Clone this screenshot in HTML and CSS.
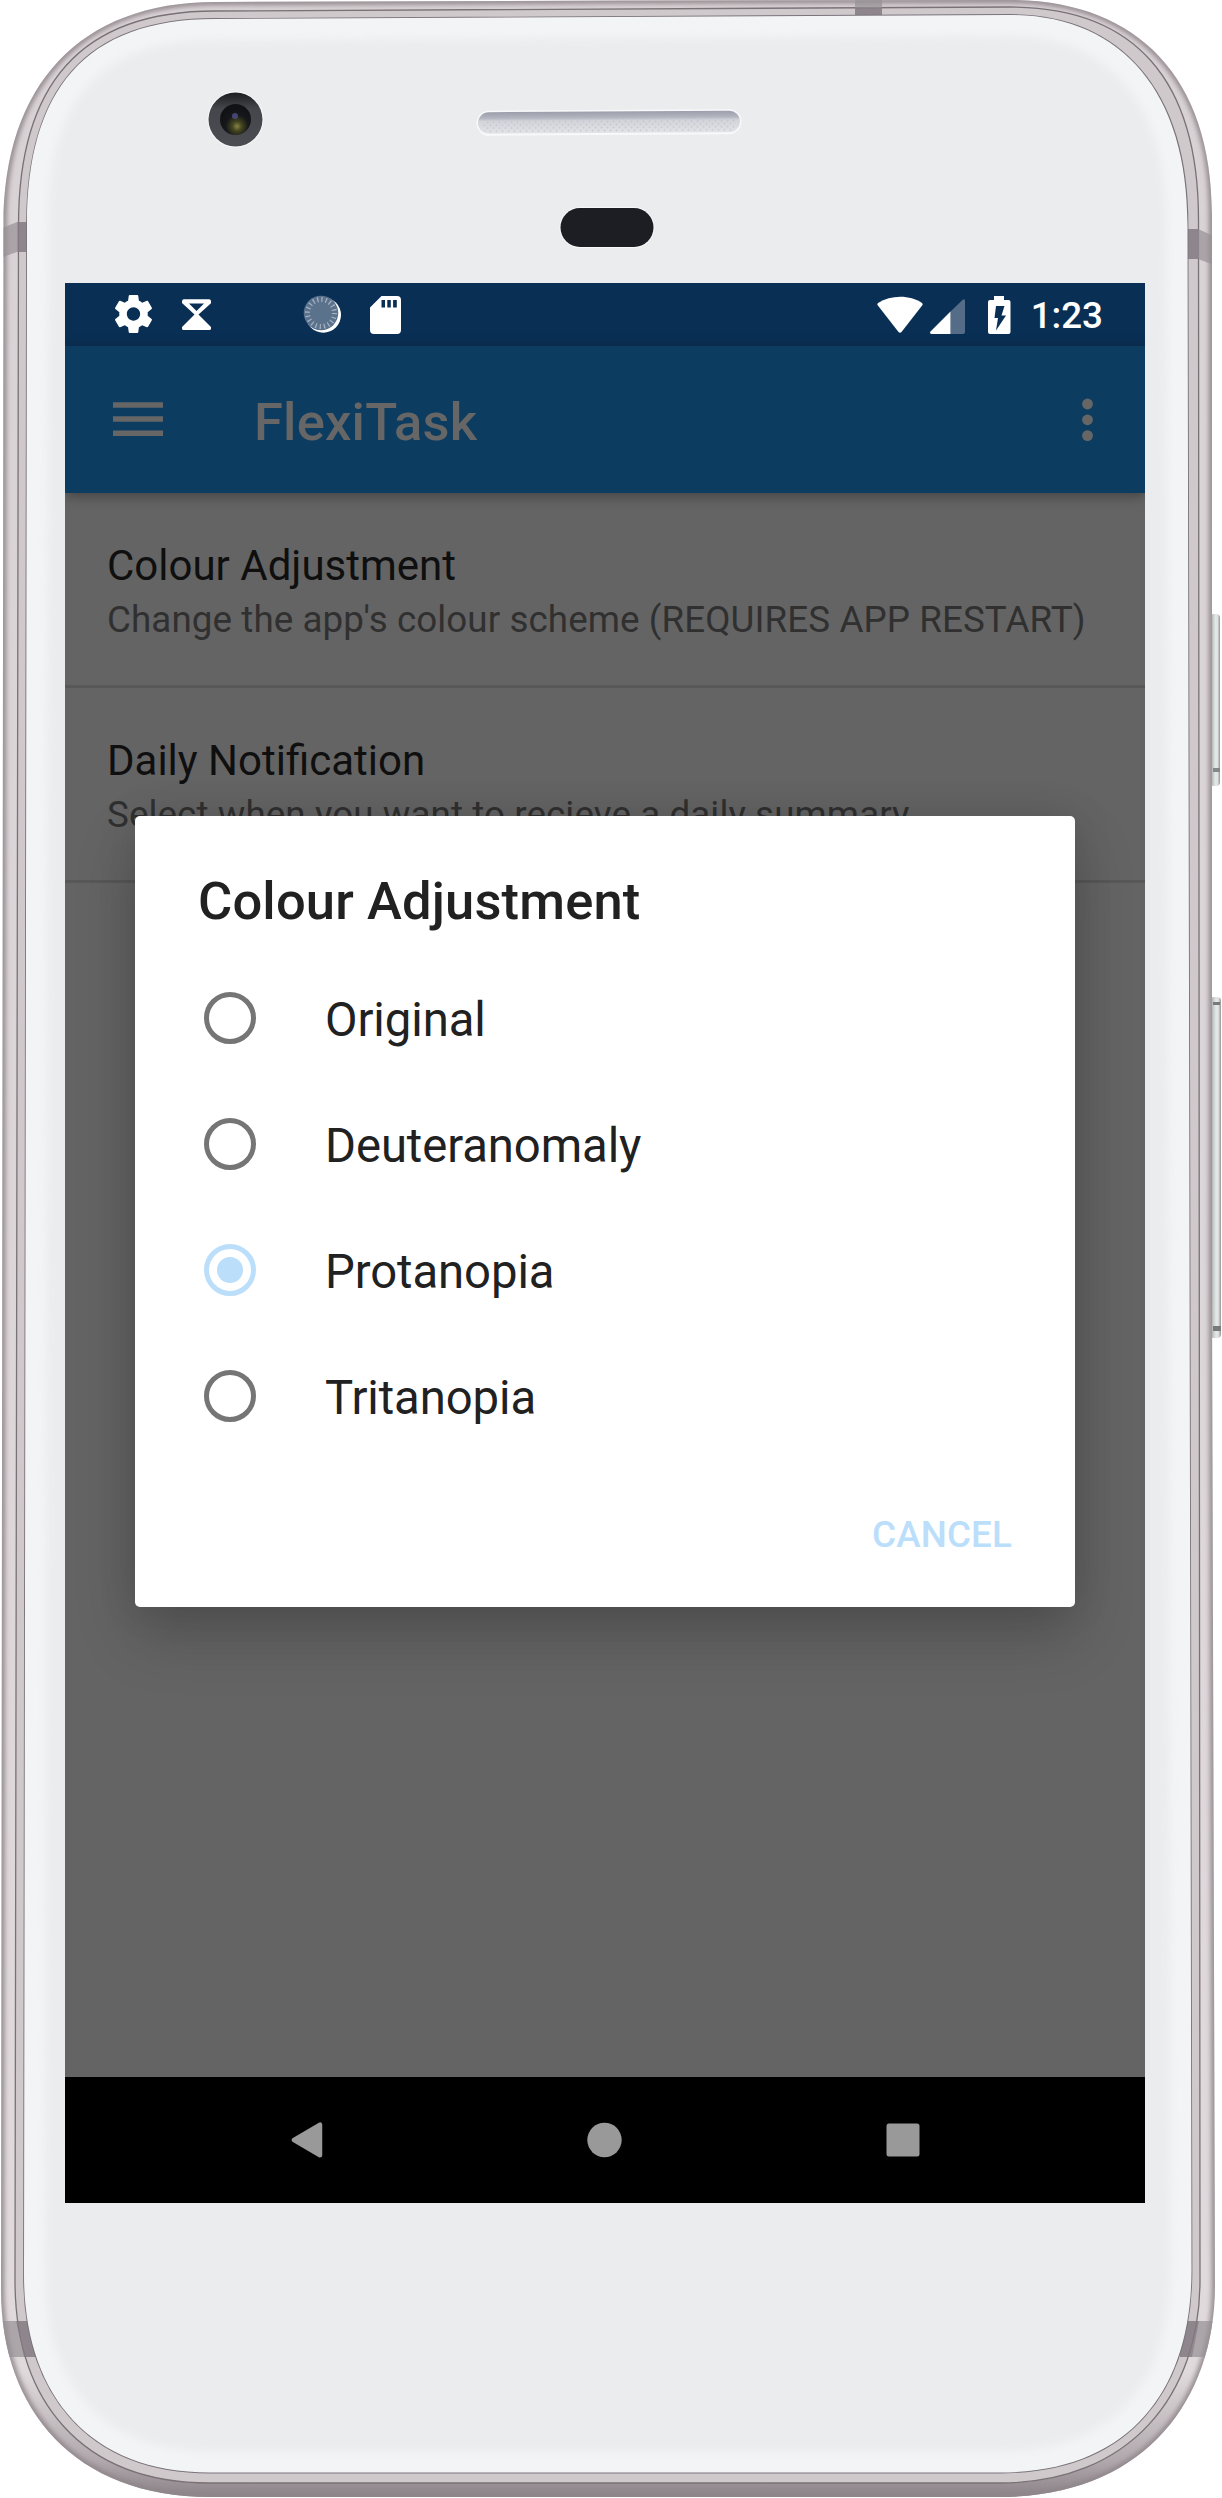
FILE: index.html
```html
<!DOCTYPE html>
<html lang="en">
<head>
<meta charset="utf-8">
<title>FlexiTask</title>
<link rel="stylesheet" href="styles.css">
</head>
<body>
<div class="device">
  <svg class="frame" width="1222" height="2498" viewBox="0 0 1222 2498" aria-hidden="true">
    <defs>
      <path id="outer" d="M3.5 225C3.5 85 80 2 215 2L620 .5L1010 0C1135 0 1212 75 1212 215L1212 1300L1215 2285C1215 2405 1140 2497 1000 2497L210 2497C75 2497 1 2410 1 2290Z"/>
      <path id="seam" d="M18.500 225C18.500 85 80 11 215 11L1010 7C1135 7 1198.500 80 1198.500 220L1200 2280C1200 2395 1130 2483 1000 2483L210 2483C80 2483 15 2400 15 2280Z"/>
      <path id="glass" d="M27 225C27 90 85 19 215 19L1010 15C1120 15 1187.500 90 1187.500 225L1191.500 2270C1191.500 2390 1130 2472.500 1000 2472.500L210 2472.500C85 2472.500 24 2390 24 2275Z"/>
      <clipPath id="outerClip"><use href="#outer"/></clipPath>
      <clipPath id="glassClip"><use href="#glass"/></clipPath>
      <linearGradient id="metal" x1="0" y1="0" x2="0" y2="1">
        <stop offset="0" stop-color="#d9d2d5"/><stop offset=".95" stop-color="#e0dadc"/><stop offset=".985" stop-color="#b1a9ad"/><stop offset="1" stop-color="#8b8387"/>
      </linearGradient>
      <linearGradient id="slot" x1="0" y1="0" x2="0" y2="1">
        <stop offset="0" stop-color="#9c9fab"/><stop offset=".28" stop-color="#b3b6c0"/><stop offset=".42" stop-color="#d2d4da"/><stop offset="1" stop-color="#e2e4e7"/>
      </linearGradient>
      <linearGradient id="key" x1="0" y1="0" x2="1" y2="0">
        <stop offset="0" stop-color="#8f9092"/><stop offset=".3" stop-color="#c5c9c8"/><stop offset=".55" stop-color="#e3e7e5"/><stop offset=".75" stop-color="#dfe3e1"/><stop offset="1" stop-color="#939695"/>
      </linearGradient>
      <linearGradient id="ring" x1="0" y1="0" x2="0" y2="1">
        <stop offset="0" stop-color="#1c1d20"/><stop offset=".3" stop-color="#45464b"/><stop offset="1" stop-color="#4c4d53"/>
      </linearGradient>
      <radialGradient id="lens" cx=".55" cy=".72" r=".6">
        <stop offset="0" stop-color="#868348"/><stop offset=".25" stop-color="#45461f"/><stop offset=".6" stop-color="#16181b"/><stop offset="1" stop-color="#111216"/>
      </radialGradient>
      <pattern id="mesh" width="6" height="6" patternUnits="userSpaceOnUse">
        <circle cx="1.500" cy="1.500" r="1" fill="#b9bcc4" opacity=".6"/><circle cx="4.500" cy="4.500" r="1" fill="#b9bcc4" opacity=".6"/>
      </pattern>
      <filter id="soft" x="-5%" y="-5%" width="110%" height="110%"><feGaussianBlur stdDeviation="5"/></filter>
      <filter id="edge" x="-5%" y="-5%" width="110%" height="110%"><feGaussianBlur stdDeviation="2.500"/></filter>
    </defs>
    <rect x="1210" y="614" width="10" height="172" rx="4" fill="url(#key)"/>
    <rect x="1213" y="768" width="7" height="4" fill="#85888a"/>
    <rect x="1210" y="997" width="11" height="341" rx="4" fill="url(#key)"/>
    <rect x="1213" y="1002" width="7" height="3" fill="#77797a"/>
    <rect x="1213" y="1326" width="8" height="5" fill="#77797a"/>
    <use href="#outer" fill="url(#metal)"/>
    <g clip-path="url(#outerClip)">
      <use href="#outer" fill="none" stroke="#8f858a" stroke-width="6" filter="url(#edge)"/>
    </g>
    <use href="#seam" fill="#d0c9cc" stroke="#797175" stroke-width="1.300"/>
    <g clip-path="url(#outerClip)">
      <path d="M0 229L17 222H30V252H17L0 258ZM1185 229H1198L1214 236V265L1198 259H1185ZM855 0H882V20H855ZM0 2321H40V2357H0ZM1180 2321H1222V2357H1180Z" fill="#969095" opacity=".7"/>
      <path d="M17.500 222H28V252H17.500ZM1187 229H1198V259H1187ZM855 8H882V18H855ZM16 2321H35L40 2357H24ZM1180 2321H1199L1192 2357H1180Z" fill="#756c71" opacity=".5"/>
    </g>
    <use href="#glass" fill="#ebecee" stroke="#79737a" stroke-width="1.800"/>
    <g clip-path="url(#glassClip)">
      <use href="#glass" fill="none" stroke="#f3f4f6" stroke-width="42" filter="url(#soft)"/>
    </g>
    <circle cx="235.500" cy="119.500" r="28" fill="#fafafa"/>
    <circle cx="235.500" cy="119.500" r="27" fill="url(#ring)"/>
    <circle cx="235.500" cy="119.500" r="15.500" fill="url(#lens)"/>
    <circle cx="235" cy="116" r="3" fill="#50508a" opacity=".8"/>
    <g transform="rotate(-.35 609 122)">
      <rect x="476.500" y="110" width="265" height="25" rx="12.500" fill="#f8f9fa"/>
      <rect x="478" y="111.500" width="262" height="21.500" rx="10.750" fill="url(#slot)"/>
      <rect x="482" y="118" width="254" height="14" rx="7" fill="url(#mesh)"/>
    </g>
    <rect x="559.500" y="207" width="95" height="41" rx="20.500" fill="#f8f8f9"/>
    <rect x="560.500" y="208" width="93" height="39" rx="19.500" fill="#1d1e23"/>
  </svg>

  <div class="screen">
    <div class="statusbar">
      <svg class="status-icons" width="300" height="63" viewBox="0 0 300 63" aria-hidden="true">
        <path transform="translate(45.700 8.200) scale(1.900)" fill="#fff" d="M19.430 12.980c.04-.32.070-.64.070-.98s-.03-.66-.07-.98l2.110-1.650c.19-.15.240-.42.120-.64l-2-3.460c-.12-.22-.39-.3-.61-.22l-2.490 1c-.52-.4-1.080-.73-1.690-.98l-.38-2.650C14.460 2.180 14.250 2 14 2h-4c-.25 0-.46.180-.49.420l-.38 2.650c-.61.250-1.170.59-1.690.98l-2.490-1c-.23-.09-.49 0-.61.220l-2 3.460c-.13.220-.07.490.120.640l2.110 1.650c-.04.320-.07.650-.07.980s.03.660.070.980l-2.110 1.650c-.19.150-.24.420-.12.640l2 3.460c.12.220.39.300.61.220l2.490-1c.52.400 1.080.730 1.690.980l.38 2.650c.03.240.24.420.49.420h4c.25 0 .46-.18.490-.42l.38-2.650c.61-.25 1.170-.59 1.690-.98l2.490 1c.23.090.49 0 .61-.22l2-3.460c.12-.22.070-.49-.12-.64l-2.110-1.650zM12 15.500c-1.930 0-3.500-1.570-3.500-3.500s1.570-3.500 3.500-3.500 3.500 1.570 3.500 3.500-1.570 3.500-3.500 3.500z"/>
        <path d="M117 18.200a2 2 0 0 1 2-2h25a2 2 0 0 1 2 2v2L133.500 31.500L146 44v1.500a1.500 1.500 0 0 1-1.500 1.500h-26a1.500 1.500 0 0 1-1.500-1.500V44L129.500 31.500L117 20ZM124 20.500L131.500 28L139 20.500Z" fill="#fff" fill-rule="evenodd"/>
        <circle cx="258.300" cy="32" r="17.700" fill="#fff"/>
        <circle cx="256" cy="30" r="17.300" fill="#5b728d"/>
        <circle cx="256" cy="30" r="13.500" fill="none" stroke="#a7b4c3" stroke-width="5" stroke-dasharray="1.200 3.041"/>
      </svg>
      <svg class="sd" width="31" height="38" viewBox="0 0 31 38" aria-hidden="true">
        <path fill="#fff" fill-rule="evenodd" d="M11.500 0H27a4 4 0 0 1 4 4V34a4 4 0 0 1-4 4H4a4 4 0 0 1-4-4V11.500ZM11.500 4V11.500H15V4ZM17.300 4V11.500H20.800V4ZM23.100 4V11.500H26.800V4Z"/>
      </svg>
      <svg class="signals" width="134" height="38" viewBox="0 0 134 38" aria-hidden="true">
        <path fill="#fff" d="M.5 9Q0 8 1 7C14-1.300 33-1.300 45 7Q46 8 45.500 9L24.500 36Q23 37.500 21.500 36Z"/>
        <path fill="#546c87" d="M73.500 15.500L86 3.600Q88 2.300 88 5V36a2 2 0 0 1-2 2H73.500Z"/>
        <path fill="#fff" d="M73.500 15.500V38H55Q52 37.500 53.500 35.500Z"/>
        <path fill="#fff" fill-rule="evenodd" d="M117 0H127V4H131.500a2 2 0 0 1 2 2V36a2 2 0 0 1-2 2H113a2 2 0 0 1-2-2V6a2 2 0 0 1 2-2H117ZM119 10L117.500 22H121L119 34.500L129 19.500H124.500L127.500 10Z"/>
      </svg>
      <span class="clock">1:23</span>
    </div>

    <header class="appbar">
      <svg width="50" height="36" viewBox="0 0 50 36" aria-hidden="true"><path d="M0 3H50M0 17H50M0 31.300H50" stroke="#666" stroke-width="5.500"/></svg>
      <h1 class="app-title">FlexiTask</h1>
      <svg width="11" height="44" viewBox="0 0 11 44" aria-hidden="true"><g fill="#666"><circle cx="5.500" cy="6" r="5.400"/><circle cx="5.500" cy="21.800" r="5.400"/><circle cx="5.500" cy="37.600" r="5.400"/></g></svg>
    </header>

    <main class="content">
      <section class="pref">
        <h2 class="pref-title">Colour Adjustment</h2>
        <p class="pref-summary">Change the app's colour scheme (REQUIRES APP RESTART)</p>
      </section>
      <section class="pref">
        <h2 class="pref-title">Daily Notification</h2>
        <p class="pref-summary">Select when you want to recieve a daily summary</p>
      </section>

      <div class="dialog" role="dialog">
        <h2 class="dialog-title">Colour Adjustment</h2>
        <ul class="options">
          <li class="option"><span class="radio"></span><span class="label">Original</span></li>
          <li class="option"><span class="radio"></span><span class="label">Deuteranomaly</span></li>
          <li class="option"><span class="radio checked"></span><span class="label">Protanopia</span></li>
          <li class="option"><span class="radio"></span><span class="label">Tritanopia</span></li>
        </ul>
        <div class="actions"><span class="cancel">CANCEL</span></div>
      </div>
    </main>

    <nav class="navbar">
      <svg width="32" height="36" viewBox="0 0 32 36" aria-hidden="true"><path d="M29 2.700V33.300L3 18Z" fill="#999" stroke="#999" stroke-width="4.500" stroke-linejoin="round"/></svg>
      <svg width="36" height="36" viewBox="0 0 36 36" aria-hidden="true"><circle cx="17.500" cy="18" r="17.200" fill="#999"/></svg>
      <svg width="34" height="34" viewBox="0 0 34 34" aria-hidden="true"><rect x=".5" y=".5" width="33" height="33" rx="2.500" fill="#999"/></svg>
    </nav>
  </div>
</div>
</body>
</html>
```

FILE: styles.css
```css
* { box-sizing: border-box; margin: 0; padding: 0; }

body {
  width: 1222px;
  background: #fff;
  font-family: Roboto, sans-serif;
}

.device {
  display: grid;
  width: 1222px;
  height: 2498px;
}

.frame, .screen { grid-area: 1 / 1; }
.frame { display: block; }
svg { flex: none; }

.screen {
  display: flex;
  flex-direction: column;
  width: 1080px;
  height: 1920px;
  margin: 283px 0 0 65px;
  background: #646464;
  overflow: hidden;
  z-index: 1;
}

.statusbar {
  display: flex;
  align-items: center;
  flex: none;
  height: 63px;
  padding-right: 42px;
  background: #0a2f54;
}
.sd { margin-left: 5px; }
.signals { margin-left: auto; }
.clock {
  margin-left: 20px;
  padding-top: 3px;
  font-size: 36.75px;
  font-weight: 500;
  line-height: 66px;
  color: #fff;
}

.appbar {
  display: flex;
  align-items: center;
  flex: none;
  height: 147px;
  padding: 0 52px 0 48px;
  background: #0d3c61;
  box-shadow: 0 3px 12px rgba(0, 0, 0, .35);
  z-index: 1;
}
.app-title {
  flex: 1;
  margin-left: 91px;
  padding-top: 4px;
  font-size: 52.5px;
  font-weight: 500;
  line-height: 62px;
  letter-spacing: .2px;
  color: #666;
}

.content {
  display: grid;
  grid-template-rows: 195px 195px;
  flex: 1;
  position: relative;
}
.pref {
  padding: 48px 42px 0;
  border-bottom: 3px solid #585858;
}
.pref-title {
  font-size: 42px;
  font-weight: 400;
  line-height: 49px;
  color: #0f0f0f;
}
.pref-summary {
  margin-top: 8px;
  font-size: 36.75px;
  line-height: 43px;
  letter-spacing: .09px;
  white-space: nowrap;
  color: #303030;
}

.dialog {
  position: absolute;
  top: 323px;
  left: 70px;
  width: 940px;
  height: 791px;
  padding: 54px 63px 0;
  border-radius: 5px;
  background: #fff;
  box-shadow: 0 28px 62px rgba(0, 0, 0, .2), 0 0 40px rgba(0, 0, 0, .1);
  color: #212121;
}
.dialog-title {
  font-size: 52.5px;
  font-weight: 500;
  line-height: 62px;
  letter-spacing: .15px;
}
.options {
  margin-top: 23px;
  list-style: none;
}
.option {
  display: flex;
  align-items: center;
  height: 126px;
  padding-left: 6px;
  font-size: 47.25px;
  line-height: 56px;
}
.label {
  padding-top: 4px;
  letter-spacing: -.08px;
}
.radio {
  display: grid;
  place-items: center;
  width: 52px;
  height: 52px;
  margin-right: 69px;
  border: 5.25px solid #757575;
  border-radius: 50%;
}
.checked { border-color: #bbdefb; }
.checked::before {
  content: "";
  width: 26px;
  height: 26px;
  border-radius: 50%;
  background: #bbdefb;
}
.actions {
  display: flex;
  justify-content: flex-end;
  margin-top: 54px;
}
.cancel {
  font-size: 36.75px;
  font-weight: 500;
  line-height: 43px;
  letter-spacing: .15px;
  color: #bbdefb;
}

.navbar {
  display: flex;
  align-items: center;
  justify-content: space-between;
  flex: none;
  height: 126px;
  padding: 0 225px 0 226px;
  background: #000;
}
```
